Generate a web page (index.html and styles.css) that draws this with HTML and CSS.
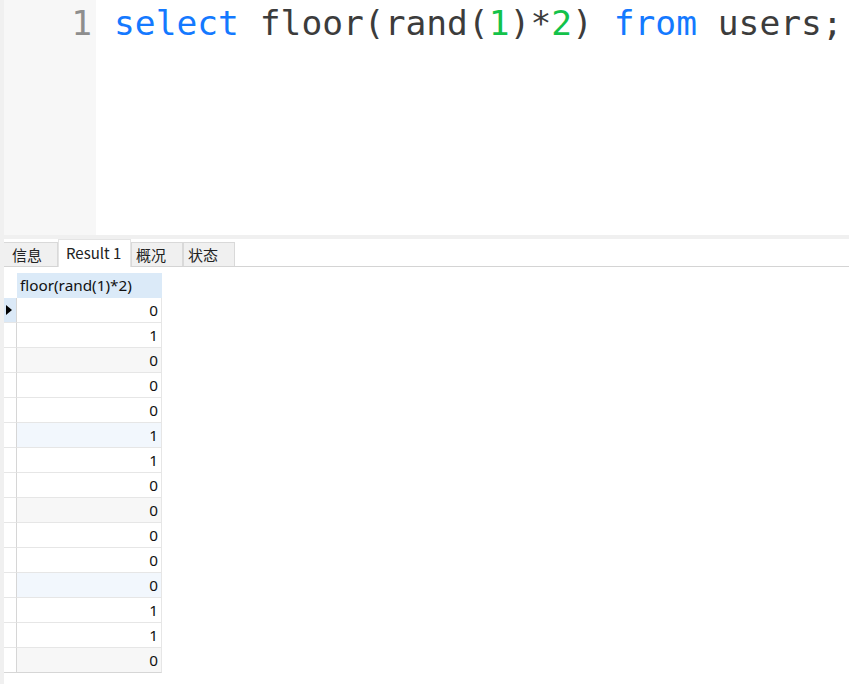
FILE: index.html
```html
<!DOCTYPE html>
<html>
<head>
<meta charset="utf-8">
<link rel="stylesheet" href="styles.css">
</head>
<body>
<div class="app">
  <div class="editor">
    <div class="gutter"><span class="ln">1</span></div>
    <div class="code"><span class="kw">select</span> floor(rand(<span class="num">1</span>)*<span class="num">2</span>) <span class="kw">from</span> users;</div>
  </div>
  <div class="split"></div>
  <div class="tabs">
    <div class="tab">信息</div>
    <div class="tab active">Result 1</div>
    <div class="tab">概况</div>
    <div class="tab">状态</div>
  </div>
  <div class="grid">
    <div class="row head"><div class="ind"></div><div class="cell">floor(rand(1)*2)</div></div>
    <div class="row"><div class="ind sel"><span class="arrow"></span></div><div class="cell num-cell">0</div></div>
    <div class="row"><div class="ind"></div><div class="cell num-cell">1</div></div>
    <div class="row gray"><div class="ind"></div><div class="cell num-cell">0</div></div>
    <div class="row"><div class="ind"></div><div class="cell num-cell">0</div></div>
    <div class="row"><div class="ind"></div><div class="cell num-cell">0</div></div>
    <div class="row blue"><div class="ind"></div><div class="cell num-cell">1</div></div>
    <div class="row"><div class="ind"></div><div class="cell num-cell">1</div></div>
    <div class="row"><div class="ind"></div><div class="cell num-cell">0</div></div>
    <div class="row gray"><div class="ind"></div><div class="cell num-cell">0</div></div>
    <div class="row"><div class="ind"></div><div class="cell num-cell">0</div></div>
    <div class="row"><div class="ind"></div><div class="cell num-cell">0</div></div>
    <div class="row blue"><div class="ind"></div><div class="cell num-cell">0</div></div>
    <div class="row"><div class="ind"></div><div class="cell num-cell">1</div></div>
    <div class="row"><div class="ind"></div><div class="cell num-cell">1</div></div>
    <div class="row gray last"><div class="ind"></div><div class="cell num-cell">0</div></div>
  </div>
</div>
</body>
</html>
```
FILE: styles.css
```css
html, body {
  margin: 0;
  padding: 0;
  background: #ffffff;
}
.app {
  width: 849px;
  height: 684px;
  border-left: 4px solid #f0f0f0;
  box-sizing: border-box;
  overflow: hidden;
}
.editor {
  display: flex;
  height: 235px;
}
.gutter {
  width: 92px;
  background: #f7f7f7;
  box-sizing: border-box;
  text-align: right;
  padding-right: 4px;
}
.ln, .code {
  font-family: "DejaVu Sans Mono", "Liberation Mono", monospace;
  font-size: 34.6px;
  line-height: 46px;
}
.ln {
  color: #8e8e8e;
}
.code {
  padding-left: 18px;
  color: #3c3c3c;
  white-space: pre;
}
.kw { color: #1479ff; }
.num { color: #13c24a; }
.split {
  height: 4px;
  background: #f0f0f0;
}
.tabs {
  display: flex;
  align-items: flex-end;
  height: 27px;
  border-bottom: 1px solid #d4d4d4;
  font-family: "Noto Sans CJK SC", "Noto Sans", sans-serif;
  font-size: 15px;
}
.tab {
  height: 24px;
  line-height: 23px;
  box-sizing: border-box;
  background: #f0f0f0;
  border: 1px solid #d9d9d9;
  border-bottom: none;
  color: #222;
  padding: 0 5px 0 4px;
  width: 52px;
}
.tab:first-child {
  width: 54px;
  border-left: none;
  padding-left: 8px;
}
.tab.active {
  background: #ffffff;
  height: 28px;
  line-height: 26px;
  width: 73px;
  margin-bottom: -1px;
  border-color: #e4e4e4;
  padding-left: 7px;
}
.grid {
  margin-top: 6px;
  font-family: "Noto Sans", "Noto Sans CJK SC", sans-serif;
  font-size: 15.3px;
  color: #111;
}
.row {
  display: flex;
  height: 25px;
}
.ind {
  width: 13px;
  box-sizing: border-box;
  border-right: 1px solid #d6d6d6;
  border-bottom: 1px solid #e6e6e6;
  display: flex;
  align-items: center;
  padding-left: 2px;
}
.head .ind {
  border: none;
}
.ind.sel {
  background: #dbe9f7;
}
.arrow {
  width: 0;
  height: 0;
  border-top: 5px solid transparent;
  border-bottom: 5px solid transparent;
  border-left: 6px solid #000;
}
.cell {
  width: 145px;
  box-sizing: border-box;
  border-right: 1px solid #e6e6e6;
  border-bottom: 1px solid #e6e6e6;
  line-height: 24px;
  padding: 0 3px;
}
.head .cell {
  background: #dbeaf8;
  border-color: #dbeaf8;
}
.num-cell {
  text-align: right;
}
.gray .cell { background: #f7f7f7; }
.blue .cell { background: #f2f7fd; }
.last .ind, .last .cell {
  border-bottom: 1px solid #d6d6d6;
}
```
